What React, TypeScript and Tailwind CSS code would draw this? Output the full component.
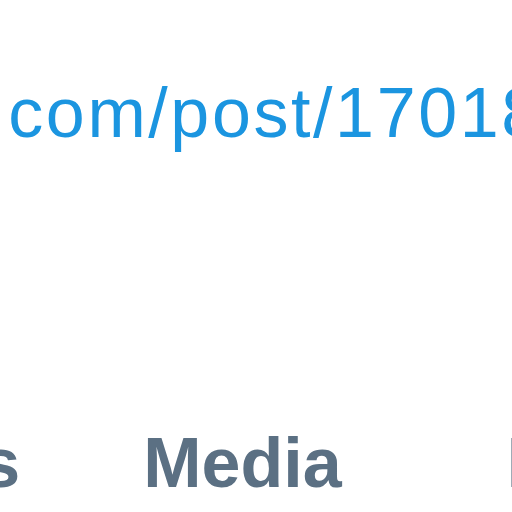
export default function App() {
  return (
    <div className="w-[512px] h-[512px] overflow-hidden bg-white font-['Liberation_Sans',Arial,sans-serif]">
      <div className="pt-[78px] whitespace-nowrap">
        <a
          href="#"
          className="ml-[-220px] block text-[70px] leading-none tracking-[2.6px] text-[#1b95e0]"
        >
          tumblr.com/post/170185392
        </a>
      </div>
      <nav className="mt-[280px] flex whitespace-nowrap text-[70px] leading-none font-bold text-[#5b7083]">
        <span className="ml-[-527px] shrink-0">Tweets &amp; replies</span>
        <span className="ml-[123px] shrink-0">Media</span>
        <span className="ml-[165px] shrink-0">Likes</span>
      </nav>
    </div>
  )
}
